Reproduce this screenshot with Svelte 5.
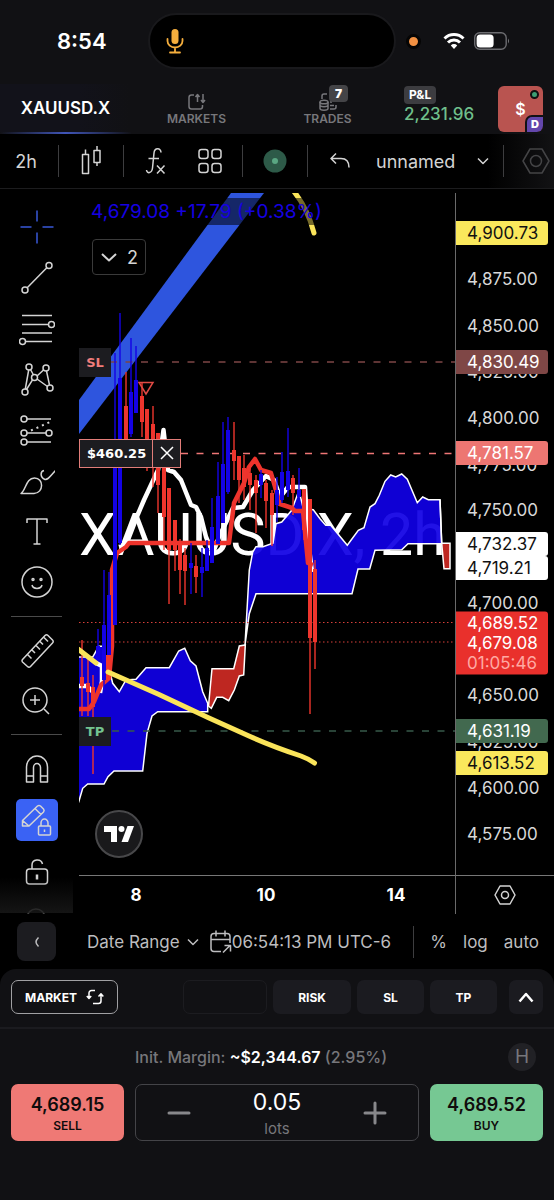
<script>
  const TOP = 193;
  const SPAN = 682;
  const pct = (y) => ((y - TOP) / SPAN) * 100 + '%';

  const ticks = [
    [279, '4,875.00'], [326, '4,850.00'], [372, '4,825.00'], [418, '4,800.00'],
    [465, '4,775.00'], [510, '4,750.00'], [603, '4,700.00'], [695, '4,650.00'],
    [742, '4,625.00'], [788, '4,600.00'], [834, '4,575.00']
  ];
  const tags = [
    [233, 'yellow', '4,900.73'], [362, 'maroon', '4,830.49'], [453, 'coral', '4,781.57'],
    [544, 'white', '4,732.37'], [568, 'white', '4,719.21'], [731, 'green', '4,631.19'],
    [763, 'yellow', '4,613.52']
  ];

  // x, wick top, wick bottom, body top, body bottom, rising
  const candles = [
    [82, 640, 716, 677, 686, 0], [88, 657, 716, 683, 692, 0], [93, 675, 774, 687, 707, 0],
    [98, 629, 660, 646, 660, 1], [104, 570, 690, 625, 680, 1], [109, 572, 655, 595, 655, 1],
    [108, 655, 680, 655, 680, 0], [115, 353, 625, 466, 625, 1], [120, 313, 545, 378, 543, 1],
    [126, 372, 450, 406, 446, 0], [131, 338, 437, 392, 434, 1], [136, 346, 413, 380, 413, 1],
    [142, 383, 437, 396, 422, 0], [147, 409, 471, 409, 450, 0], [153, 406, 487, 424, 466, 0],
    [158, 433, 513, 433, 485, 0], [164, 448, 550, 460, 517, 0], [169, 488, 604, 488, 550, 0],
    [175, 520, 571, 520, 550, 0], [180, 539, 594, 543, 570, 0], [185, 548, 605, 555, 571, 0],
    [191, 543, 594, 563, 568, 1], [196, 555, 593, 566, 577, 0], [202, 548, 597, 567, 573, 1],
    [207, 540, 571, 548, 571, 1], [212, 498, 563, 527, 563, 1], [218, 462, 544, 496, 544, 1],
    [223, 422, 523, 464, 523, 1], [228, 417, 494, 430, 492, 1], [234, 422, 480, 450, 461, 0],
    [239, 456, 503, 456, 480, 0], [244, 455, 500, 468, 487, 0], [250, 465, 510, 473, 485, 0],
    [256, 475, 533, 480, 493, 0], [261, 470, 498, 474, 485, 1], [266, 480, 528, 483, 501, 0],
    [272, 490, 546, 493, 515, 0], [277, 477, 522, 490, 505, 1], [282, 452, 503, 472, 500, 1],
    [288, 428, 497, 471, 490, 1], [293, 475, 515, 478, 493, 0], [299, 468, 497, 490, 497, 1],
    [304, 489, 540, 489, 530, 0], [310, 499, 714, 499, 638, 0], [315, 560, 669, 569, 642, 0]
  ];

  let lots = $state('0.05');
  const step = (d) => (lots = Math.max(0, Number(lots) + d).toFixed(2));
</script>

{#snippet hex()}
  <svg width="24" height="24" viewBox="0 0 24 24"><path d="M7 3h10l5 9-5 9H7l-5-9z" /><circle cx="12" cy="12" r="3.5" /></svg>
{/snippet}
{#snippet chevron()}
  <svg width="14" height="8" viewBox="0 0 14 8"><path d="M2 1.500l5 5 5-5" /></svg>
{/snippet}

<div class="app">
  <header class="status">
    <span class="clock">8:54</span>
    <span class="island">
      <svg width="20" height="28" viewBox="0 0 20 28" fill="none" stroke="#f5ae3d" stroke-width="1.800" stroke-linecap="round">
        <rect x="6.500" y="2" width="7" height="15" rx="3.500" fill="#f5ae3d" stroke="none" />
        <path d="M2.500 12v2a7.500 6.500 0 0 0 15 0v-2M10 20.500V25M5 25.500h10" />
      </svg>
    </span>
    <span class="dot"></span>
    <svg class="wifi" width="22" height="18" viewBox="0 0 22 18" fill="none" stroke="#fff" stroke-width="3">
      <path d="M1.500 6.500a13.500 13.500 0 0 1 19 0M5 10.500a8.500 8.500 0 0 1 12 0" />
      <path d="M11 17l-3.200-3.600a4.500 4.500 0 0 1 6.400 0z" fill="#fff" stroke="none" />
    </svg>
    <svg width="36" height="18" viewBox="0 0 36 18">
      <rect x=".7" y=".7" width="31.500" height="16.600" rx="5" fill="none" stroke="#6c6c70" stroke-width="1.400" />
      <rect x="2.600" y="2.600" width="17" height="12.800" rx="3.500" fill="#fff" />
      <path d="M34 6.500q2 2.500 0 5z" fill="#77777a" />
    </svg>
  </header>

  <nav class="tabs">
    <button class="tab current">XAUUSD.X</button>
    <button class="tab">
      <svg width="20" height="18" viewBox="0 0 20 18"><path d="M7 2H4.500A2.500 2.500 0 0 0 2 4.500v9A2.500 2.500 0 0 0 4.500 16h8.500a2.500 2.500 0 0 0 2.500-2.500V12M10.500 9V2M8.500 4l2-2.500 2 2.500M16 1v8M14 7l2 2.500L18 7" /></svg>
      MARKETS
    </button>
    <button class="tab trades">
      <svg width="20" height="18" viewBox="0 0 20 18"><path d="M4 6V3a2 2 0 0 1 2-2h3M18 12v2a2 2 0 0 1-2 2h-4M12 12.500h4M12 9h2" /><ellipse cx="6" cy="9" rx="4" ry="1.800" /><path d="M2 9v6.500c0 2.300 8 2.300 8 0V9M2 12c0 2.300 8 2.300 8 0" /></svg>
      <b class="count">7</b>
      TRADES
    </button>
    <div class="pnl"><span>P&amp;L</span><strong>2,231.96</strong></div>
    <button class="account">$<i class="online"></i><b>D</b></button>
  </nav>

  <div class="toolbar">
    <button>2h</button><i></i>
    <button aria-label="Chart type"><svg width="22" height="30" viewBox="0 0 22 30"><path d="M2.500 8.500h6v19h-6zM5.500 8.500v-5M14 4.500h6v12h-6zM17 4.500V0M17 16.500V20" /></svg></button><i></i>
    <button aria-label="Indicators"><svg width="22" height="28" viewBox="0 0 22 28"><path d="M16 5.500C16 .5 9.500.5 9 6L7.500 21c-.6 5.500-5.500 6-6 2M3.500 11.500H14M12 18.500l7.500 8M19.500 18.500l-7.500 8" /></svg></button>
    <button aria-label="Layouts"><svg width="24" height="26" viewBox="0 0 24 26"><rect x="1" y="1.500" width="9" height="9" rx="2.500" /><rect x="14" y="1.500" width="9" height="9" rx="2.500" /><rect x="1" y="15.500" width="9" height="9" rx="2.500" /><rect x="14" y="15.500" width="9" height="9" rx="2.500" /></svg></button><i></i>
    <button aria-label="Market open"><svg width="24" height="24" viewBox="0 0 24 24"><g stroke="none"><circle cx="12" cy="12" r="11.500" fill="#2d5a48" /><circle cx="12" cy="12" r="3" fill="#5aa783" /></g></svg></button><i></i>
    <button aria-label="Undo"><svg width="20" height="18" viewBox="0 0 20 18"><path d="M6 1.500l-5 5 5 5M1 6.500h10c5 0 8 3 8 9" /></svg></button>
    <button class="layout">unnamed {@render chevron()}</button><i></i>
    <button class="gear" aria-label="Chart settings"><svg width="30" height="30" viewBox="0 0 30 30"><path d="M9 3h12l7 12-7 12H9L2 15z" /><circle cx="15" cy="15" r="5.500" /></svg></button>
  </div>

  <main>
    <aside class="tools">
      <button aria-label="Cross" class="cross"><svg viewBox="0 0 36 36"><path d="M18 1.500v11M18 23.500v11M1.500 18h11M23.500 18h11" /></svg></button>
      <button aria-label="Trend line"><svg viewBox="0 0 36 36"><circle cx="30" cy="5.500" r="3" /><circle cx="6" cy="30" r="3" /><path d="M8.200 27.800L27.800 7.700" /></svg></button>
      <button aria-label="Fib retracement"><svg viewBox="0 0 36 36"><path d="M3 4.500h30M3 13.500h26.500M3 22h30M6.500 30.500H33" /><circle cx="32.500" cy="13.500" r="3" /><circle cx="3.500" cy="30.500" r="3" /></svg></button>
      <button aria-label="Patterns"><svg viewBox="0 0 36 36"><circle cx="10" cy="5" r="3" /><circle cx="27" cy="6" r="3" /><circle cx="15.500" cy="15.500" r="3" /><circle cx="6" cy="30" r="3" /><circle cx="31" cy="26" r="3" /><path d="M9.700 8L6.300 27M11.500 7.500l3 5.500M13.500 17.800L7.500 27.500M18 14l6.500-6M18 17l10.500 7.500M27.500 9l3 14" /></svg></button>
      <button aria-label="Forecast"><svg viewBox="0 0 36 36"><circle cx="5" cy="6" r="3" /><circle cx="5" cy="20" r="3" /><circle cx="5" cy="29" r="3" /><circle cx="30" cy="20" r="3" /><path d="M8 6h24M8 20h19M8 29h24" /><path d="M12 17.500l20-9" stroke-dasharray="2 4" stroke-width="2" /></svg></button>
      <button aria-label="Brush"><svg viewBox="0 0 36 36"><path d="M2 29.500C7 26 7 14 15.500 14 25 14 25 29 15 29.500zM25 6.500c-4 1-4 7 1 9 3 .5 5-3 11-9.500" /></svg></button>
      <button aria-label="Text"><svg viewBox="0 0 36 36"><path d="M8 8V4h20v4M18 4v25M14.500 29h7" /></svg></button>
      <button aria-label="Emoji"><svg viewBox="0 0 36 36"><circle cx="18" cy="16" r="15" /><path d="M13 19c1 4.500 9 4.500 10 0" /><circle cx="14" cy="13.500" r="1" /><circle cx="22" cy="13.500" r="1" /></svg></button>
      <hr />
      <button aria-label="Measure"><svg viewBox="0 0 36 36"><path d="M3.500 26.500L26 2.500q1.500-1.500 3 0l4.500 4.500q1.500 1.500 0 3L11.500 33.500q-1.500 1.500-3 0l-5-4.500q-1-1.200 0-2.500zM8.500 21.500l4 4M13 17l3 3M17 12.500l4 4M21 8.500l3 3M25 4.500l4 4" /></svg></button>
      <button aria-label="Zoom in"><svg viewBox="0 0 36 36"><circle cx="16" cy="16" r="12" /><path d="M25 25l5 5M16 11v10M11 16h10" /></svg></button>
      <hr />
      <button aria-label="Magnet"><svg viewBox="0 0 36 36"><path d="M7.500 31V16a10.500 11 0 0 1 21 0v15h-7V16.500a3.500 4 0 0 0-7 0V31zM7.500 25h7M21.500 25h7" /></svg></button>
      <button aria-label="Keep drawing" class="active"><svg viewBox="0 0 36 36"><path d="M3.500 18.500L18.500 4q1.500-1.200 3 0l3 3q1.200 1.500 0 3L10 24H3.500zM16 6.500l6 6M3.500 18.500L10 24" /><rect x="19.500" y="24" width="12" height="9" rx="1" /><path d="M22 24v-3a3.500 4 0 0 1 7 0v3M25.500 27.500v2.500" /></svg></button>
      <button aria-label="Lock drawings"><svg viewBox="0 0 36 36"><rect x="7.500" y="16" width="21" height="15" rx="3" /><path d="M13 16v-4c0-6 9-7 10.500-1" /><path d="M18 21.500v5" stroke-width="2.500" /></svg></button>
      <button aria-label="Hide drawings"><svg viewBox="0 0 36 36"><circle cx="17" cy="18" r="9" /></svg></button>
    </aside>

    <section class="chart">
      <svg class="plot" viewBox="79 193 376 682">
        <text class="mark" x="79" y="555">XAUUSD.X, 2h</text>
        <g stroke="#fff" stroke-width="1.500" fill="#1000e4" fill-opacity=".93">
          <path d="M78 657h14.700l6-10.700h4l5 16.700 5 20.300 6.600 8.400 6.700-11.700 10-.7 10-11.600h23.300l9.400-16.700 6-2.700 5.600 12.400 5.700 5.300 6.700 25.700 5 11.600v8.400h-50l-5.700 4.300-5 17.300-4.300 37.700H114l-6 5.700-4 7.300H87.700l-5 4.300L79 801l-3 8V657z" />
          <path d="M245 645l4.300-75 3.400-18 3.300-5.300h7l10-3.400 3-19.600 5.700-1.700 10-11.700 7.300-20 4.300 18.400 10 1 6.700 9 5.700 6.600h5l16.600 20 11-15 5.700-2.600 6-20.700 5-3.300 4.300-8.400 5.700-14 5.700-6.300 5 2 6-3 5.600 5.300 10 23.400 5.400-5.700 5.600 2.700h11.700l1.700 44h-33.700l-6.300 6-26.700.6-5.300 18.700h-11.700l-6 24.700H256l-6.700 20z" />
          <path fill="#cc2a24" d="M208.500 706l3.500-37.300h21.700l5.600-22.700 6-1-1.600 30-4.400 1-5 14-5.600 10.700-6-3.400h-6l-5.400 11z" />
          <path fill="#cc2a24" d="M440 499.500l1.700 43.800h8.300v25.400h-6l-2.300-25.400z" />
        </g>
        <path d="M231 193h33L79 434v-34z" fill="#2e55de" />
        <path class="dash" d="M110 362h345" stroke="#7d4646" />
        <path class="dash" d="M181 453.500h274" stroke="#ef7676" />
        <path class="dash" d="M112 731h343" stroke="#37594a" />
        <path d="M79 622.500h376M79 642h376" stroke="#d8403a" stroke-dasharray="1.500 2.500" />
        <g fill="none" stroke-width="4.500" stroke-linejoin="round">
          <path stroke="#fff" d="M79 686h8l6 6M96 663l6 3v15l-2 12M119 547l7-2 12-31 6-14 14-30 5.500-40 4.500 40 6 2 7 8 10 25 5 2 5 10 5 20 7 16 6-16 14-29 10-1 10-17 13-14 8 4 6 17 8-10h17l3 53 4 32" />
          <path stroke="#ee332c" d="M79 709h10l5-7 7-17 8-7 3-32v-76l5-17 9-6 3-4h100l5-40 10-20 5-16 6-8 6 11 10 3 4 14 5 17 12 4 3 3h8l5 52 5 2" />
        </g>
        {#each candles as [x, h, l, a, b, up]}
          <g fill={up ? '#1402e6' : '#ee352d'}>
            <rect x={x - 0.7} y={h} width="1.4" height={l - h} />
            <rect x={x - 2} y={a} width="4" height={b - a} />
          </g>
        {/each}
        <path d="M139 382.500h14l-7 11.500z" fill="none" stroke="#e04a44" stroke-width="1.500" />
        <g fill="none" stroke="#fae45a" stroke-width="5" stroke-linecap="round">
          <path d="M78 649l18 14M108 672l51 22.500 50 23.500 40 18q22 10 52 20 8 3 13.500 7" />
          <path d="M291 188q16 18 23 45" />
        </g>
      </svg>
      <p class="quote">4,679.08 +17.79 (+0.38%)</p>
      <button class="legend"><svg width="18" height="11" viewBox="0 0 18 11"><path d="M2 2l7 6.500L16 2" /></svg> 2</button>
      <span class="level sl">SL</span>
      <span class="level tp">TP</span>
      <div class="position"><span>$460.25</span><button aria-label="Close position"><svg width="16" height="16" viewBox="0 0 16 16"><path d="M2 2l12 12M14 2L2 14" /></svg></button></div>
      <a class="brand" href="#tv" aria-label="TradingView"><svg width="30" height="18" viewBox="0 0 30 18" fill="#fff"><path d="M0 1h13v16H7V7H0z" /><circle cx="17.500" cy="4" r="3" /><path d="M23.500 1H30l-6 16h-6.500z" /></svg></a>
    </section>

    <div class="scale">
      {#each ticks as [y, t]}<span style:top={pct(y)}>{t}</span>{/each}
      {#each tags as [y, c, t]}<span class="tag {c}" style:top={pct(y)}>{t}</span>{/each}
      <div class="last" style:top={pct(643)}><b>4,689.52</b><b>4,679.08</b><b class="left">01:05:46</b></div>
    </div>

    <div class="dates"><b>8</b><b>10</b><b>14</b></div>
    <button class="corner" aria-label="Scale settings">{@render hex()}</button>
  </main>

  <div class="range">
    <button class="back" aria-label="Collapse"><svg width="8" height="14" viewBox="0 0 8 14"><path d="M5.500 2.500Q3 5 3 7t2.500 4.500" /></svg></button>
    <button class="period">Date Range {@render chevron()}</button>
    <button aria-label="Go to date"><svg width="22" height="24" viewBox="0 0 22 24"><path d="M11 21.500H4a3 3 0 0 1-3-3V6.500a3 3 0 0 1 3-3h13a3 3 0 0 1 3 3V13M1 9.500h19M6 .5v6M15 .5v6M13 22.500l7-7M14.500 15.500H20.500v6" /></svg></button>
    <button class="time">06:54:13 PM UTC-6</button>
    <i></i>
    <button>%</button>
    <button>log</button>
    <button>auto</button>
  </div>

  <section class="order">
    <div class="options">
      <button class="type">MARKET <svg width="18" height="16" viewBox="0 0 18 16"><path d="M9 1.500H5.500a2.500 2.500 0 0 0-2.500 2.500v5M.8 7L3 9.500 5.200 7M7 14.500h5.500A2.500 2.500 0 0 0 15 12V5.500M12.500 7.500L15 4.800l2.300 2.700" /></svg></button>
      <span class="blank"></span>
      <button class="wide">RISK</button>
      <button>SL</button>
      <button>TP</button>
      <button class="up" aria-label="Expand"><svg width="16" height="11" viewBox="0 0 16 11"><path d="M1.500 9.500L8 2l6.500 7.500" /></svg></button>
    </div>
    <div class="margin">
      <p>Init. Margin: <strong>~$2,344.67</strong> (2.95%)</p>
      <button>H</button>
    </div>
    <div class="trade">
      <button class="sell"><b>4,689.15</b><small>SELL</small></button>
      <div class="stepper">
        <button aria-label="Decrease" onclick={() => step(-0.01)}><svg width="24" height="24" viewBox="0 0 24 24"><path d="M2 12h20" /></svg></button>
        <label><input bind:value={lots} /><span>lots</span></label>
        <button aria-label="Increase" onclick={() => step(0.01)}><svg width="24" height="24" viewBox="0 0 24 24"><path d="M2 12h20M12 2v20" /></svg></button>
      </div>
      <button class="buy"><b>4,689.52</b><small>BUY</small></button>
    </div>
  </section>
</div>

<style>
  :global(body) { margin: 0; background: #111114; }
  .app { font-family: Inter, 'Liberation Sans', sans-serif; color: #d4d4d4; background: #000; min-height: 100vh; display: flex; flex-direction: column; }
  .app * { box-sizing: border-box; }
  button { font: inherit; color: inherit; background: none; border: 0; padding: 0; display: flex; align-items: center; justify-content: center; }
  button svg { fill: none; stroke: currentColor; stroke-width: 1.5; stroke-linejoin: round; flex: none; }
  p { margin: 0; }

  .status { height: 84px; background: #111114; display: flex; align-items: center; padding: 0 44px 2px 57px; }
  .clock { color: #fff; font-size: 22px; font-weight: 600; width: 91px; }
  .island { width: 248px; height: 56px; border-radius: 28px; background: #000; border: 2px solid #19191c; display: flex; align-items: center; padding-left: 15px; }
  .dot { width: 15px; height: 15px; margin-left: 10px; border-radius: 50%; background: #f39143; border: 3px solid #050505; }
  .wifi { margin-left: auto; margin-right: 9px; }

  .tabs { height: 50px; background: #111114; display: flex; align-items: center; padding-right: 11px; }
  .tab { width: 131px; height: 100%; flex-direction: column; gap: 1px; font-size: 12px; line-height: 14px; font-weight: 600; color: #77777b; position: relative; }
  .tab.current { font-size: 17px; color: #fff; background: linear-gradient(90deg, #12121a 60%, #111114); border-bottom: 2px solid; border-image: linear-gradient(90deg, #111114, #4055b8 50%, #111114) 1; }
  .count { position: absolute; right: 45px; top: 1px; width: 19px; height: 17px; border-radius: 4px; background: #444447; color: #fff; font-size: 12px; line-height: 17px; }
  .pnl { padding-left: 11px; display: flex; flex-direction: column; align-items: flex-start; flex: 1; margin-bottom: 8px; }
  .pnl span { background: #3c3c40; color: #fff; font-size: 12px; line-height: 18px; font-weight: 700; padding: 0 5px; border-radius: 4px; }
  .pnl strong { color: #6fbf8b; font-size: 17px; line-height: 20px; font-weight: 500; }
  .account { width: 45px; height: 46px; border-radius: 6px; background: #b95450; color: #fff; font-size: 16px; font-weight: 600; position: relative; overflow: hidden; }
  .online { position: absolute; right: 4px; top: 4px; width: 9px; height: 9px; border-radius: 50%; background: #3e9f73; border: 2px solid #111; }
  .account b { position: absolute; right: 0; bottom: 0; width: 16px; height: 15px; border-radius: 5px 0 6px 0; background: #6346ab; box-shadow: 0 0 0 2px #111114; font-size: 11px; line-height: 15px; }

  .toolbar { height: 55px; border-bottom: 1px solid #1c1c1e; display: flex; align-items: center; gap: 10px; padding-left: 4px; font-size: 18px; overflow: hidden; background: linear-gradient(90deg, #000 88%, #121214); }
  .toolbar button { width: 44px; height: 44px; flex: none; }
  .toolbar i, .range i { width: 1px; height: 32px; background: #3d3d3f; flex: none; }
  .toolbar .layout { flex: 1; width: auto; justify-content: space-between; padding: 0 3px 0 4px; }
  .toolbar .gear { color: #444446; margin-right: -4px; }

  main { display: grid; grid-template-columns: 79px 1fr 99px; grid-template-rows: auto 38px; padding-top: 4px; background: #000; }
  .tools { grid-row: 1 / 3; width: 73px; height: 0; min-height: 100%; overflow: hidden; display: flex; flex-direction: column; align-items: center; gap: 9px; padding-top: 13px; position: relative; }
  .tools::after { content: ''; position: absolute; left: 0; right: 0; bottom: 1px; height: 36px; background: linear-gradient(transparent, #1c1c1cbb); }
  .tools button { width: 42px; height: 42px; border-radius: 5px; flex: none; }
  .tools svg { width: 36px; height: 36px; }
  .tools .cross { color: #3858d8; }
  .tools .active { background: #3a62f4; }
  .tools hr { width: 51px; height: 1px; border: 0; background: #4a4a4a; margin: 2px 0 4px; flex: none; }
  .tools button:last-child { margin-top: -4px; color: #444; }

  .chart { position: relative; overflow: hidden; border-bottom: 1px solid #777; }
  .plot { display: block; width: 100%; height: auto; }
  .mark { font-family: Roboto, sans-serif; font-size: 59px; fill: #fff; }
  .dash { stroke-width: 1.5; stroke-dasharray: 7 8.5; }
  .quote { position: absolute; left: 8px; top: 5px; padding: 0 4px; background: #0008; color: #1600e2; font-size: 19px; line-height: 27px; white-space: nowrap; }
  .legend { position: absolute; left: 13px; top: 46px; width: 54px; height: 36px; border: 1px solid #3a3a3a; border-radius: 4px; background: #000; font-size: 18px; gap: 9px; }
  .legend svg { stroke-width: 2; }
  .level { position: absolute; left: 0; width: 32px; font: 700 13px/29px 'DejaVu Sans', sans-serif; text-align: center; background: #1c1c20; }
  .sl { top: 22.7%; color: #f17d7b; }
  .tp { top: 76.8%; color: #74c391; }
  .position { position: absolute; left: 0; top: 36%; display: flex; height: 29px; border: 1px solid #e27d79; background: #1c1c20; color: #fff; font: 700 13px/27px 'DejaVu Sans', sans-serif; }
  .position span { padding: 0 6px 0 7px; }
  .position button { width: 28px; border-left: 1px solid #e27d79; }
  .brand { position: absolute; left: 16px; bottom: 17px; width: 48px; height: 48px; border-radius: 50%; border: 2px solid #48484a; background: #19191b; display: grid; place-items: center; }

  .scale { position: relative; border-left: 1px solid #6a6a6a; border-bottom: 1px solid #777; font-size: 17px; line-height: 24px; color: #d8d8d8; }
  .scale span { position: absolute; left: 0; width: 92px; padding-left: 11px; transform: translateY(-50%); }
  .scale .tag { border-radius: 0 3px 3px 0; color: #fff; }
  .scale .yellow { background: #fae85c; color: #111; }
  .scale .maroon { background: #7f4746; }
  .scale .coral { background: #ed7672; }
  .scale .white { background: #fff; color: #111; }
  .scale .green { background: #42694f; }
  .last { position: absolute; left: 0; width: 92px; height: 63px; padding: 1px 0 0 11px; transform: translateY(-50%); background: #e9302c; border-radius: 0 3px 3px 0; color: #fff; display: flex; flex-direction: column; line-height: 20px; }
  .last b { font-weight: 400; }
  .last .left { color: #ffa9a3; }

  .dates { display: grid; grid-template-columns: 114px 146px 114px; align-items: center; text-align: center; font-size: 17px; color: #fff; }
  .corner { border-left: 1px solid #6a6a6a; }

  .range { height: 55px; display: flex; align-items: center; padding: 0 15px 0 17px; font-size: 17px; color: #bdbdbf; white-space: nowrap; }
  .back { width: 39px; height: 39px; border-radius: 8px; background: #1c1c20; margin-right: 31px; flex: none; }
  .period { gap: 6px; margin-right: 10px; }
  .time { margin-right: auto; }
  .range i { margin-right: 16px; }
  .range i ~ button { margin-right: 16px; }
  .range button:last-child { margin-right: 0; }

  .order { flex: 1; background: #111114; border-radius: 16px 16px 0 0; }
  .options { display: flex; gap: 6px; padding: 11px 11px 13px; border-bottom: 2px solid #1b1b1f; color: #fff; font-size: 12px; font-weight: 700; }
  .options button, .blank { width: 67px; height: 34px; border-radius: 7px; background: #1b1b20; }
  .options .type { width: 107px; background: none; border: 1px solid #a0a0a3; gap: 9px; margin-right: auto; }
  .options .blank { width: 84px; background: none; border: 1px solid #1c1c20; }
  .options .wide { width: 78px; }
  .options .up { width: 34px; margin-left: 6px; }
  .options .up svg { stroke-width: 2.5; }
  .margin, .trade { display: grid; grid-template-columns: 113px 1fr 113px; gap: 11px; padding: 0 11px; }
  .margin { align-items: center; height: 55px; font-size: 16px; font-weight: 500; color: #77777b; }
  .margin p { grid-column: 2; }
  .margin strong { color: #fff; font-weight: 600; }
  .margin button { justify-self: end; width: 28px; height: 28px; margin-right: 7px; border-radius: 50%; background: #212125; font-size: 19px; font-weight: 400; }
  .trade { height: 57px; }
  .sell, .buy { flex-direction: column; border-radius: 7px; color: #100c0c; gap: 2px; padding-top: 2px; }
  .sell { background: #ef7975; }
  .buy { background: #76c893; }
  .sell b, .buy b { font-size: 18px; line-height: 22px; font-weight: 600; }
  small { font-size: 12px; line-height: 16px; font-weight: 600; }
  .stepper { border: 1px solid #444448; border-radius: 7px; display: grid; grid-template-columns: 1fr 110px 1fr; }
  .stepper button { color: #88888b; }
  .stepper button svg { stroke-width: 3; stroke-linecap: round; }
  label { display: flex; flex-direction: column; align-items: center; font-size: 15px; line-height: 20px; color: #77777b; }
  input { width: 100%; border: 0; background: none; padding: 0; text-align: center; color: #fff; font: 400 23px/34px Inter, sans-serif; height: 34px; }
</style>
